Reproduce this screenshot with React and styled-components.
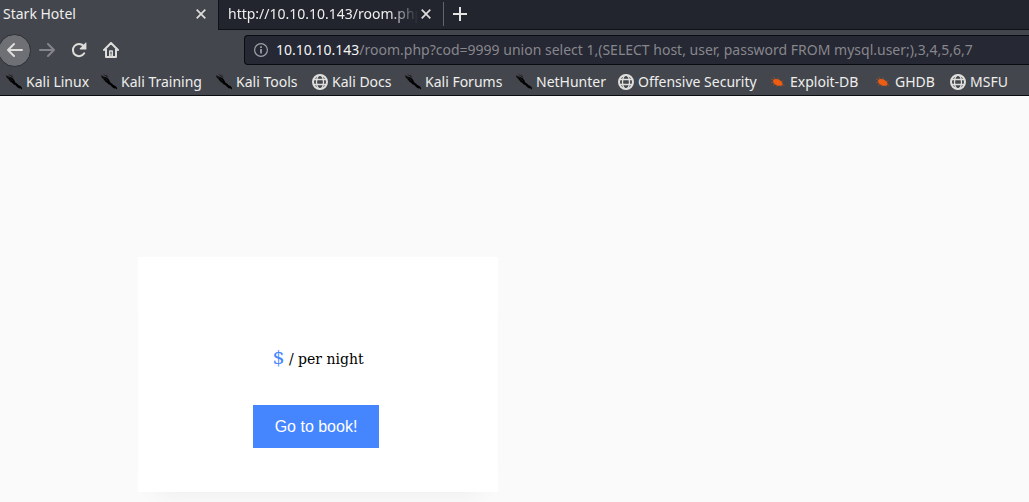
import React from "react";
import styled, { createGlobalStyle } from "styled-components";

const GlobalStyle = createGlobalStyle`
  * { box-sizing: border-box; }
  body {
    margin: 0;
    background: #fafafa;
    font-family: "Noto Sans", sans-serif;
    font-size: 14px;
  }
  button { border: 0; padding: 0; background: none; font: inherit; color: inherit; }
  svg { display: block; flex: none; }
`;

const Chrome = styled.header`
  background: #43464d;
  color: #eeeeec;
  border-bottom: 1px solid #0b0c10;
`;

const TabStrip = styled.div`
  display: flex;
  height: 30px;
  background: #22242e;
`;

const Tab = styled.div`
  display: flex;
  align-items: center;
  width: ${(p) => (p.$active ? 218 : 226)}px;
  padding: 0 ${(p) => (p.$active ? 9 : 10)}px 2px ${(p) => (p.$active ? 3 : 9)}px;
  background: ${(p) => (p.$active ? "#43464d" : "#22242e")};
  border-left: ${(p) => (p.$active ? "0" : "1px solid #101117")};
  border-bottom: ${(p) => (p.$active ? "0" : "1px solid #101117")};
`;

const TabTitle = styled.span`
  flex: 1;
  min-width: 0;
  overflow: hidden;
  white-space: nowrap;
  line-height: 20px;
  mask-image: ${(p) => (p.$fade ? "linear-gradient(to left, transparent, #000 28px)" : "none")};
`;

const TabClose = styled.button`
  display: flex;
  align-items: center;
  justify-content: center;
  width: 16px;
  height: 16px;
`;

const NewTabArea = styled.div`
  flex: 1;
  display: flex;
  align-items: center;
  border-bottom: 1px solid #101117;
  padding-bottom: 2px;
`;

const Separator = styled.span`
  width: 1px;
  height: 24px;
  margin-right: 8px;
  margin-left: -1px;
  background: #63656d;
`;

const NavBar = styled.div`
  display: flex;
  align-items: center;
  height: 40px;
`;

const NavButton = styled.button`
  display: flex;
  align-items: center;
  justify-content: center;
  width: 32px;
  height: 32px;
  color: ${(p) => (p.$dim ? "#83858a" : "#deddda")};
`;

const BackButton = styled(NavButton)`
  && {
    width: 33px;
    height: 33px;
    margin-left: -2px;
    border-radius: 50%;
    border: 1px solid #2c2e34;
    background: #6e7075;
  }
`;

const AddressBox = styled.label`
  flex: 1;
  display: flex;
  align-items: center;
  height: 30px;
  margin-left: 117px;
  padding-left: 8px;
  gap: 7px;
  background: #262833;
  border: 1px solid #0b0c10;
  border-right: 0;
  border-radius: 4px 0 0 4px;
  color: #a0a1a6;
`;

const AddressField = styled.div`
  position: relative;
  flex: 1;
  line-height: 28px;
  white-space: nowrap;
  color: #86878d;
  b { font-weight: 400; color: #f4f4f6; }
`;

const AddressInput = styled.input`
  position: absolute;
  inset: 0;
  width: 100%;
  border: 0;
  padding: 0;
  background: transparent;
  color: transparent;
  font: inherit;
  outline: 0;
`;

const Bookmarks = styled.nav`
  display: grid;
  grid-template-columns: 95px 115px 96px 93px 111px 102px 152px 105px 75px auto;
  height: 25px;
  padding: 0 0 2px 6px;
`;

const Bookmark = styled.a`
  display: flex;
  align-items: center;
  gap: 4px;
  color: inherit;
  text-decoration: none;
  white-space: nowrap;
  line-height: 20px;
`;

const Page = styled.main`
  padding: 161px 24px 10px 138px;
`;

const RoomCard = styled.section`
  display: flex;
  flex-direction: column;
  align-items: center;
  max-width: 360px;
  padding: 88px 20px 44px;
  background: #fff;
  box-shadow: 0 18px 24px -18px rgba(0, 0, 0, 0.06);
`;

const Price = styled.p`
  margin: 0 0 32px;
  font-family: "DejaVu Serif", serif;
  font-size: 14px;
  line-height: 28px;
  color: #000;
  span { font-size: 19px; line-height: 20px; color: #4586ff; }
`;

const BookButton = styled.button`
  && {
    height: 43px;
    padding: 0 22px;
    margin-right: 4px;
    background: #4586ff;
    color: #fff;
    font-family: "Liberation Sans", Arial, sans-serif;
    font-size: 16px;
  }
`;

const Cross = () => (
  <svg width="10" height="10" viewBox="0 0 10 10" stroke="#deddda" strokeWidth="1.7" fill="none">
    <path d="M.7.7l8.6 8.6M9.3.7L.7 9.3" />
  </svg>
);

const Plus = () => (
  <svg width="16" height="16" viewBox="0 0 16 16" stroke="#e4e4e2" strokeWidth="2" fill="none">
    <path d="M8 1v14M1 8h14" />
  </svg>
);

const Arrow = ({ flip }) => (
  <svg width="16" height="16" viewBox="0 0 16 16" fill="none" stroke="currentColor" strokeWidth="2" strokeLinecap="round" strokeLinejoin="round">
    <path d={flip ? "M1 8h14M9 2l6 6-6 6" : "M15 8H1M7 2L1 8l6 6"} />
  </svg>
);

const Reload = () => (
  <svg width="16" height="16" viewBox="0 0 16 16">
    <path d="M13.2 11.3A6.1 6.1 0 1 1 12.6 4" fill="none" stroke="currentColor" strokeWidth="2" strokeLinecap="round" />
    <path d="M15.4 1v6.4H9.2c-.5 0-.7-.6-.4-.9l5.700-5.800c.4-.3.9-.1.9.3z" fill="currentColor" />
  </svg>
);

const Home = () => (
  <svg width="16" height="16" viewBox="0 0 16 16" fill="none" stroke="currentColor" strokeWidth="2" strokeLinecap="round" strokeLinejoin="round">
    <path d="M1 8l7-7 7 7M3 7v8h10V7" />
    <path d="M6.700 14.500V9h2.600v5.500" strokeWidth="1.400" />
    <path d="M8 12v3" strokeWidth="1" />
  </svg>
);

const Info = () => (
  <svg width="16" height="16" viewBox="0 0 16 16" fill="none" stroke="currentColor">
    <circle cx="8" cy="8" r="6.4" strokeWidth="1.2" />
    <path d="M8 7v4.500M8 4.200v1.700" strokeWidth="1.700" />
  </svg>
);

const Globe = () => (
  <svg width="16" height="16" viewBox="0 0 16 16" fill="none" stroke="#dededc">
    <circle cx="8" cy="8" r="7" strokeWidth="2" />
    <ellipse cx="8" cy="8" rx="3.5" ry="7" strokeWidth="1.3" />
    <path d="M1.5 5.500h13M1.500 10.500h13" strokeWidth="1.3" />
  </svg>
);

const Knife = () => (
  <svg width="16" height="16" viewBox="0 0 16 16" fill="#000">
    <path d="M0 1.300L2.500 2.600 5 3.200 7 4.400 8.300 6.200 9.300 8.600 11 9.600 12.300 11 14.500 12 16 13.800V15.600L14.300 14.200 13 14.600 10.500 12.600 9.300 11 7.300 10.200 6 8.600 4.200 8 4.400 6.800 2.600 6.200 2.800 4.900 1 3.900z" />
    <path d="M2.600.5L5.300 2.100 7 3.800M5.200.9L7 2.600" fill="none" stroke="#15161a" strokeWidth=".7" />
    <path d="M1 2.500L4.500 4.500 6.600 7" fill="none" stroke="#34363c" strokeWidth=".5" />
  </svg>
);

const Bug = () => (
  <svg width="16" height="16" viewBox="0 0 16 16" fill="#ed5c13" stroke="#ed5c13">
    <ellipse cx="7.800" cy="8.400" rx="5" ry="3" transform="rotate(24 7.800 8.400)" stroke="none" />
    <path d="M1 5l3 1.400M3.500 2.800l2 3M7.800 3.500l.8 2.500M1.200 8.500l3-.5M5.500 9.500l-2.500 2M8 11l-1.500 1.500M11.500 7.500l1.800-.7M12 10.500l2.400.8M10.500 11l.8 1.600" strokeWidth=".6" strokeOpacity=".75" fill="none" />
  </svg>
);

const bookmarks = [
  ["Kali Linux", Knife],
  ["Kali Training", Knife],
  ["Kali Tools", Knife],
  ["Kali Docs", Globe],
  ["Kali Forums", Knife],
  ["NetHunter", Knife],
  ["Offensive Security", Globe],
  ["Exploit-DB", Bug],
  ["GHDB", Bug],
  ["MSFU", Globe],
];

const host = "10.10.10.143";
const path = "/room.php?cod=9999 union select 1,(SELECT host, user, password FROM mysql.user;),3,4,5,6,7";

export default function App() {
  return (
    <>
      <GlobalStyle />
      <Chrome>
        <TabStrip>
          <Tab $active>
            <TabTitle>Stark Hotel</TabTitle>
            <TabClose aria-label="Close tab"><Cross /></TabClose>
          </Tab>
          <Tab>
            <TabTitle $fade>http://10.10.10.143/room.php</TabTitle>
            <TabClose aria-label="Close tab"><Cross /></TabClose>
          </Tab>
          <NewTabArea>
            <Separator />
            <button aria-label="New tab"><Plus /></button>
          </NewTabArea>
        </TabStrip>
        <NavBar>
          <BackButton aria-label="Back"><Arrow /></BackButton>
          <NavButton $dim aria-label="Forward"><Arrow flip /></NavButton>
          <NavButton aria-label="Reload"><Reload /></NavButton>
          <NavButton aria-label="Home"><Home /></NavButton>
          <AddressBox>
            <Info />
            <AddressField>
              <b>{host}</b>{path}
              <AddressInput aria-label="Address" />
            </AddressField>
          </AddressBox>
        </NavBar>
        <Bookmarks>
          {bookmarks.map(([name, Icon]) => (
            <Bookmark href="#" key={name}><Icon />{name}</Bookmark>
          ))}
        </Bookmarks>
      </Chrome>
      <Page>
        <RoomCard>
          <Price><span>$</span> / per night</Price>
          <BookButton>Go to book!</BookButton>
        </RoomCard>
      </Page>
    </>
  );
}
